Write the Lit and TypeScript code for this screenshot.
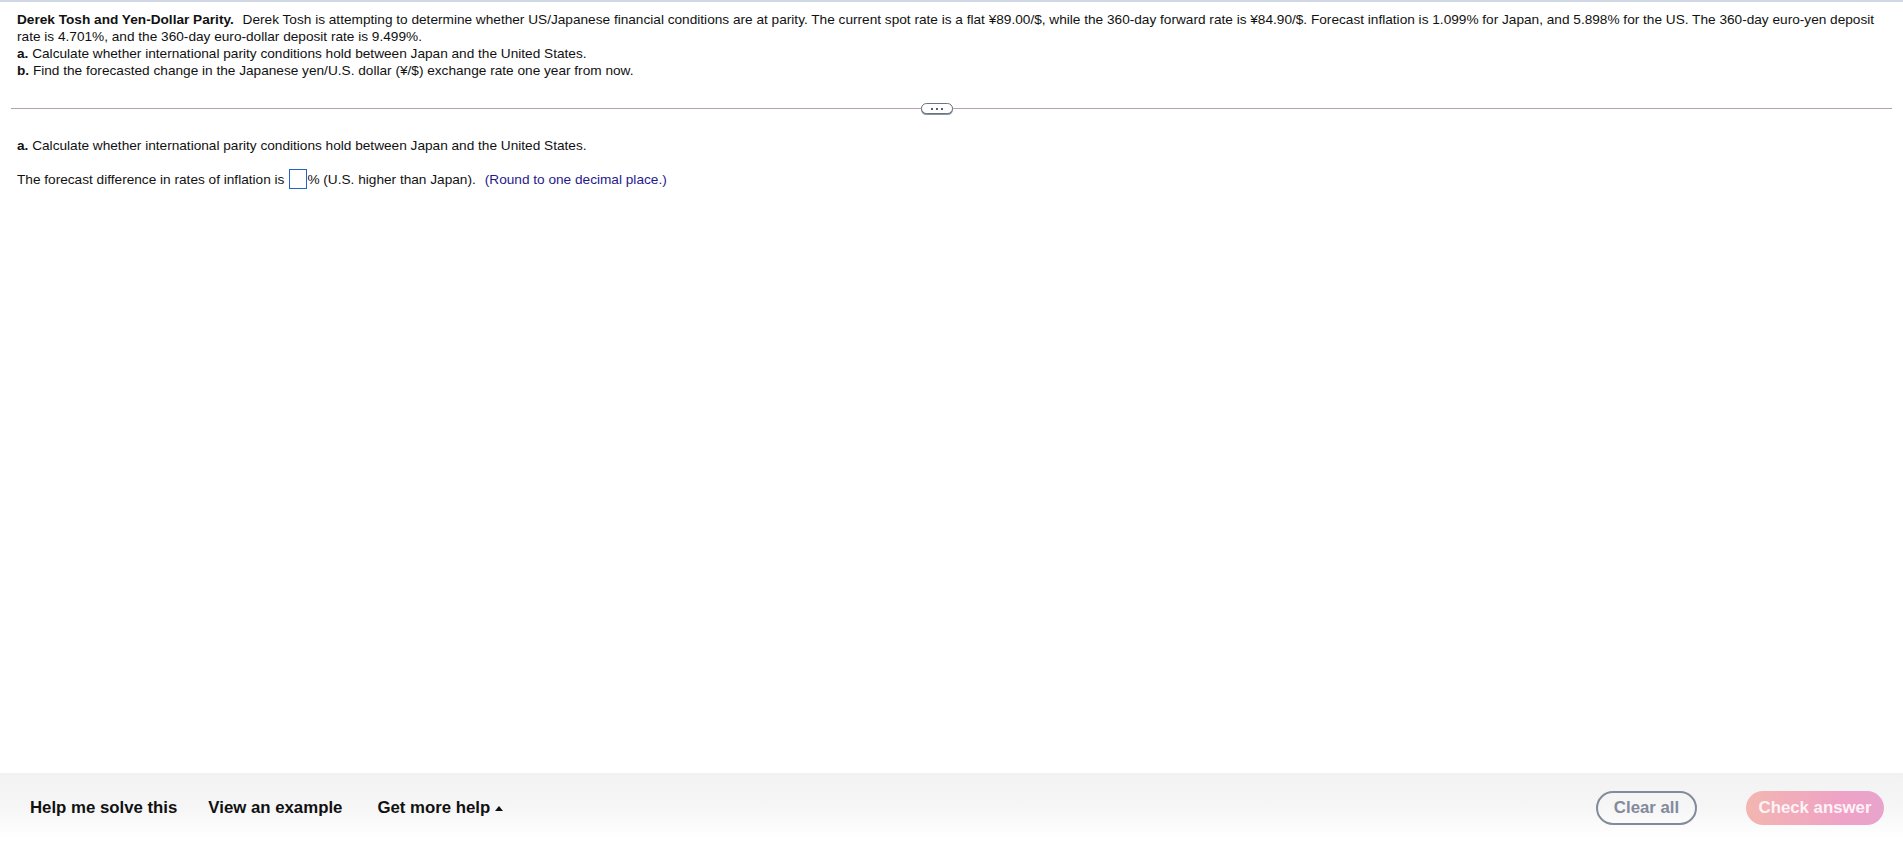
import { LitElement, html, css } from "lit";
import { customElement } from "lit/decorators.js";

@customElement("app-root")
export class AppRoot extends LitElement {
  static styles = css`
    :host {
      display: flex;
      flex-direction: column;
      height: 850px;
      overflow: hidden;
      background: #fff;
      font-family: "Liberation Sans", Arial, sans-serif;
      font-size: 13.65px;
      line-height: 17px;
      color: #111;
      box-sizing: border-box;
      border-top: 2px solid #cfd6e4;
    }
    .main { flex: 1; }
    .question { padding: 9px 17px 0; }
    .question p { margin: 0; }
    .title { margin-right: 5px; }
    .divider {
      margin: 29px 11px 0;
      padding-right: 30px;
      height: 1px;
      background: #b9a0ac;
      display: flex;
      justify-content: center;
      align-items: center;
    }
    .expander {
      box-sizing: border-box;
      width: 32px;
      height: 11px;
      border: 1px solid #6a7382;
      border-radius: 6px;
      background: #fff;
      display: flex;
      align-items: center;
      justify-content: center;
      gap: 3px;
      box-shadow: 0 1px 0 #8a93a0;
    }
    .expander i { width: 2px; height: 2px; background: #555e6e; display: block; }
    .answer { padding: 28px 17px 0; }
    .answer p { margin: 0; }
    .line { margin-top: 15px !important; display: flex; align-items: center; height: 20px; white-space: pre; }
    .box {
      box-sizing: border-box;
      width: 18px;
      height: 20px;
      margin: 0 0 0 5px;
      border: 1px solid #2563c9;
      background: #fff;
    }
    .hint { color: #1f1a8c; margin-left: 9px; }
    .footer {
      height: 77px;
      flex: none;
      background: linear-gradient(#f2f2f2, #f6f6f6 45%, #fff 85%);
      display: flex;
      align-items: center;
      padding: 0 19px 8px 30px;
      font-size: 16.8px;
      color: #111;
      box-sizing: border-box;
    }
    .link { font-weight: 700; white-space: nowrap; }
    .link.second { margin-left: 31px; }
    .link.third { margin-left: 35px; display: flex; align-items: center; gap: 5px; }
    .caret { width: 8px; height: 5px; display: block; margin-top: 2px; }
    .spacer { flex: 1; }
    .btn {
      box-sizing: border-box;
      height: 34px;
      border-radius: 17px;
      font-weight: 700;
      display: flex;
      align-items: center;
      justify-content: center;
      white-space: nowrap;
    }
    .clear {
      width: 101px;
      border: 2px solid #828a9c;
      color: #828a9c;
      background: transparent;
    }
    .check {
      width: 138px;
      margin-left: 49px;
      color: #fdf3f7;
      background: linear-gradient(90deg, #f3b6b0, #efa2c6 70%, #e8a4cc);
    }
  `;

  render() {
    return html`
      <div class="main">
        <div class="question">
          <p><b class="title">Derek Tosh and Yen-Dollar Parity.</b> Derek Tosh is attempting to determine whether US/Japanese financial conditions are at parity. The current spot rate is a flat ¥89.00/$, while the 360-day forward rate is ¥84.90/$. Forecast inflation is 1.099% for Japan, and 5.898% for the US. The 360-day euro-yen deposit rate is 4.701%, and the 360-day euro-dollar deposit rate is 9.499%.</p>
          <p><b>a.</b> Calculate whether international parity conditions hold between Japan and the United States.</p>
          <p><b>b.</b> Find the forecasted change in the Japanese yen/U.S. dollar (¥/$) exchange rate one year from now.</p>
        </div>
        <div class="divider"><div class="expander"><i></i><i></i><i></i></div></div>
        <div class="answer">
          <p><b>a.</b> Calculate whether international parity conditions hold between Japan and the United States.</p>
          <p class="line">The forecast difference in rates of inflation is<span class="box"></span>% (U.S. higher than Japan).<span class="hint">(Round to one decimal place.)</span></p>
        </div>
      </div>
      <div class="footer">
        <span class="link">Help me solve this</span>
        <span class="link second">View an example</span>
        <span class="link third">Get more help
          <svg class="caret" viewBox="0 0 8 5"><path d="M4 0 L8 5 L0 5 Z" fill="#111"></path></svg>
        </span>
        <span class="spacer"></span>
        <span class="btn clear">Clear all</span>
        <span class="btn check">Check answer</span>
      </div>
    `;
  }
}
